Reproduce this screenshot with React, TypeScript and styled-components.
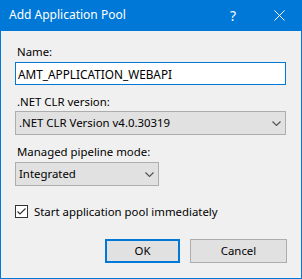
import React from "react";
import styled, { createGlobalStyle } from "styled-components";

const Global = createGlobalStyle`
  html, body { margin: 0; padding: 0; background: #f0f0f0; }
  body { font-family: "Noto Sans", "Open Sans", sans-serif; }
  * { box-sizing: border-box; }
`;

const Window = styled.div`
  width: 302px;
  height: 279px;
  display: flex;
  flex-direction: column;
  background: #f0f0f0;
  border: 1px solid #0078d7;
  border-top: none;
  font-family: "Noto Sans", "Open Sans", sans-serif;
  font-size: 11.4px;
  color: #000;
`;

const TitleBar = styled.div`
  height: 31px;
  margin: 0 -1px;
  background: #0078d7;
  color: #fff;
  display: flex;
  align-items: center;
  padding-left: 9px;
  flex-shrink: 0;
`;

const Title = styled.div`
  flex: 1;
  font-size: 12px;
  line-height: 16px;
  margin-top: -1px;
`;

const TitleButton = styled.div`
  width: 46px;
  height: 31px;
  display: flex;
  align-items: center;
  justify-content: center;
  font-size: 14px;
`;

const Body = styled.div`
  flex: 1;
  display: flex;
  flex-direction: column;
  padding: 13px 14px 0 14px;
`;

const Label = styled.div<{ $mt?: number }>`
  line-height: 16px;
  height: 16px;
  margin-top: ${(p) => p.$mt ?? 0}px;
  padding-left: 2px;
`;

const TextBox = styled.div`
  margin-top: 2px;
  height: 23px;
  width: 271px;
  border: 1px solid #0078d7;
  background: #fff;
  display: flex;
  align-items: center;
  padding-left: 2px;
  line-height: 16px;
  font-size: 11.8px;
`;

const Select = styled.div<{ $w: number; $mt: number }>`
  margin-top: ${(p) => p.$mt}px;
  height: 24px;
  width: ${(p) => p.$w}px;
  border: 1px solid #adadad;
  background: #e1e1e1;
  display: flex;
  align-items: center;
  padding-left: 3px;
  padding-right: 4px;
  line-height: 16px;
`;

const SelectText = styled.span`
  flex: 1;
`;

const CheckRow = styled.div`
  margin-top: 18px;
  display: flex;
  align-items: center;
  gap: 6px;
  height: 14px;
`;

const CheckBox = styled.div`
  width: 13px;
  height: 13px;
  border: 1px solid #333;
  background: #fff;
  display: flex;
  align-items: center;
  justify-content: center;
`;

const ButtonRow = styled.div`
  margin-top: 21px;
  display: flex;
  justify-content: flex-end;
  gap: 10px;
`;

const Button = styled.div<{ $default?: boolean; $w: number }>`
  width: ${(p) => p.$w}px;
  height: 24px;
  background: #e1e1e1;
  border: ${(p) => (p.$default ? "2px solid #0078d7" : "1px solid #adadad")};
  display: flex;
  align-items: center;
  justify-content: center;
  line-height: 16px;
`;

const Chevron = () => (
  <svg width="9" height="5" viewBox="0 0 9 5">
    <polyline points="0.5,0.5 4.5,4.5 8.5,0.5" fill="none" stroke="#505050" strokeWidth="1.1" />
  </svg>
);

export default function App() {
  return (
    <>
      <Global />
      <Window>
        <TitleBar>
          <Title>Add Application Pool</Title>
          <TitleButton>?</TitleButton>
          <TitleButton>
            <svg width="11" height="11" viewBox="0 0 11 11">
              <line x1="0.5" y1="0.5" x2="10.5" y2="10.5" stroke="#fff" strokeWidth="1" />
              <line x1="10.5" y1="0.5" x2="0.5" y2="10.5" stroke="#fff" strokeWidth="1" />
            </svg>
          </TitleButton>
        </TitleBar>
        <Body>
          <Label>Name:</Label>
          <TextBox>AMT_APPLICATION_WEBAPI</TextBox>
          <Label $mt={9}>.NET CLR version:</Label>
          <Select $w={271} $mt={1}>
            <SelectText>.NET CLR Version v4.0.30319</SelectText>
            <Chevron />
          </Select>
          <Label $mt={9}>Managed pipeline mode:</Label>
          <Select $w={144} $mt={2}>
            <SelectText>Integrated</SelectText>
            <Chevron />
          </Select>
          <CheckRow>
            <CheckBox>
              <svg width="11" height="11" viewBox="0 0 11 11">
                <polyline points="1.5,5.5 4,8 9.5,2.5" fill="none" stroke="#333" strokeWidth="1.2" />
              </svg>
            </CheckBox>
            <span>Start application pool immediately</span>
          </CheckRow>
          <ButtonRow>
            <Button $default $w={75}>OK</Button>
            <Button $w={97}>Cancel</Button>
          </ButtonRow>
        </Body>
      </Window>
    </>
  );
}
